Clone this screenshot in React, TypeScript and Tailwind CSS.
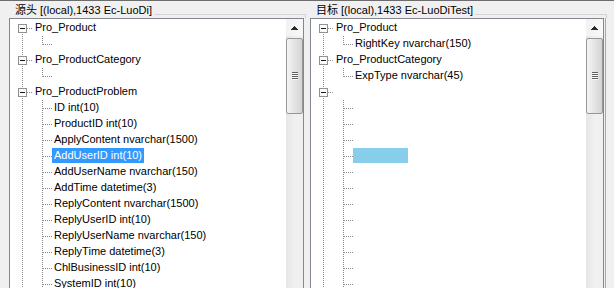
import React from "react";

type Row = {
  kind: "root" | "leaf";
  label: string;
  first?: boolean;
  last?: boolean;
  sel?: "active" | "inactive";
};

const leftRows: Row[] = [
  { kind: "root", label: "Pro_Product", first: true },
  { kind: "leaf", label: "", last: true },
  { kind: "root", label: "Pro_ProductCategory" },
  { kind: "leaf", label: "", last: true },
  { kind: "root", label: "Pro_ProductProblem" },
  { kind: "leaf", label: "ID int(10)" },
  { kind: "leaf", label: "ProductID int(10)" },
  { kind: "leaf", label: "ApplyContent nvarchar(1500)" },
  { kind: "leaf", label: "AddUserID int(10)", sel: "active" },
  { kind: "leaf", label: "AddUserName nvarchar(150)" },
  { kind: "leaf", label: "AddTime datetime(3)" },
  { kind: "leaf", label: "ReplyContent nvarchar(1500)" },
  { kind: "leaf", label: "ReplyUserID int(10)" },
  { kind: "leaf", label: "ReplyUserName nvarchar(150)" },
  { kind: "leaf", label: "ReplyTime datetime(3)" },
  { kind: "leaf", label: "ChlBusinessID int(10)" },
  { kind: "leaf", label: "SystemID int(10)" },
];

const rightRows: Row[] = [
  { kind: "root", label: "Pro_Product", first: true },
  { kind: "leaf", label: "RightKey nvarchar(150)", last: true },
  { kind: "root", label: "Pro_ProductCategory" },
  { kind: "leaf", label: "ExpType nvarchar(45)", last: true },
  { kind: "root", label: "" },
  { kind: "leaf", label: "" },
  { kind: "leaf", label: "" },
  { kind: "leaf", label: "" },
  { kind: "leaf", label: "", sel: "inactive" },
  { kind: "leaf", label: "" },
  { kind: "leaf", label: "" },
  { kind: "leaf", label: "" },
  { kind: "leaf", label: "" },
  { kind: "leaf", label: "" },
  { kind: "leaf", label: "" },
  { kind: "leaf", label: "" },
  { kind: "leaf", label: "" },
];

const DOT = "#8a8a8a";

// expander box + root connector
function RootCell({ first }: { first?: boolean }) {
  return (
    <svg width="23" height="16" className="shrink-0" shapeRendering="crispEdges">
      {!first && <line x1="12.5" y1="0" x2="12.5" y2="4" stroke={DOT} strokeDasharray="1 1" />}
      <line x1="12.5" y1="14" x2="12.5" y2="16" stroke={DOT} strokeDasharray="1 1" />
      <line x1="17" y1="8.5" x2="23" y2="8.5" stroke={DOT} strokeDasharray="1 1" />
      <rect x="8.5" y="4.5" width="8" height="8" fill="#fbfbfb" stroke="#919191" />
      <line x1="10" y1="8.5" x2="15" y2="8.5" stroke="#1a1a1a" />
    </svg>
  );
}

function PassCell() {
  return (
    <svg width="23" height="16" className="shrink-0" shapeRendering="crispEdges">
      <line x1="12.5" y1="0" x2="12.5" y2="16" stroke={DOT} strokeDasharray="1 1" />
    </svg>
  );
}

function LeafCell({ last }: { last?: boolean }) {
  return (
    <svg width="19" height="16" className="shrink-0" shapeRendering="crispEdges">
      <line x1="9.5" y1="0" x2="9.5" y2={last ? 9 : 16} stroke={DOT} strokeDasharray="1 1" />
      <line x1="10" y1="8.5" x2="19" y2="8.5" stroke={DOT} strokeDasharray="1 1" />
    </svg>
  );
}

function TreeRow({ row }: { row: Row }) {
  const selClass =
    row.sel === "active"
      ? "bg-[#3399ff] text-white"
      : row.sel === "inactive"
      ? "bg-[#87ceeb] w-[55px]"
      : "";
  return (
    <div className="flex h-[16px] items-start">
      {row.kind === "root" ? (
        <RootCell first={row.first} />
      ) : (
        <>
          <PassCell />
          <LeafCell last={row.last} />
        </>
      )}
      <span className={`h-[15px] whitespace-nowrap px-[2px] leading-[15px] ${selClass}`}>{row.label}</span>
    </div>
  );
}

function ScrollBar() {
  return (
    <div className="flex w-[17px] shrink-0 flex-col bg-gradient-to-r from-[#e6e6e6] via-[#f0f0f0] to-[#f0f0f0]">
      <div className="flex h-[17px] shrink-0 items-center justify-center bg-gradient-to-r from-[#f2f2f2] to-[#f8f8f8]">
        <svg width="7" height="4" shapeRendering="crispEdges">
          <path d="M3.5 0 L7 4 L0 4 Z" fill="#2a2a2a" />
        </svg>
      </div>
      <div className="mt-[2px] flex h-[76px] shrink-0 items-center justify-center rounded-[2px] border border-[#979797] bg-gradient-to-r from-[#f4f4f4] via-[#e4e4e4] to-[#d4d4d4]">
        <svg width="6" height="8" shapeRendering="crispEdges">
          {[0, 2, 4, 6].map((y) => (
            <g key={y}>
              <line x1="0" y1={y + 0.5} x2="6" y2={y + 0.5} stroke="#5e5e5e" />
              <line x1="0" y1={y + 1.5} x2="6" y2={y + 1.5} stroke="#fafafa" />
            </g>
          ))}
        </svg>
      </div>
      <div className="flex-1" />
    </div>
  );
}

function TreeBox({ rows, className }: { rows: Row[]; className: string }) {
  return (
    <div className={`flex h-[272px] shrink-0 border border-[#828790] bg-white ${className}`}>
      <div className="flex-1 overflow-hidden pt-[1px]">
        {rows.map((r, i) => (
          <TreeRow key={i} row={r} />
        ))}
      </div>
      <ScrollBar />
    </div>
  );
}

export default function App() {
  return (
    <div className="flex h-[288px] w-[614px] overflow-hidden border-t border-[#6d6d6d] bg-[#f0f0f0] font-['Liberation_Sans','Noto_Sans_CJK_SC',sans-serif] text-[11px] text-black">
      {/* source */}
      <div className="flex w-[306px] shrink-0 flex-col">
        <div className="flex h-[17px] shrink-0 pl-[15px]">
          <span className="whitespace-nowrap leading-[18px]">源头 [(local),1433 Ec-LuoDi]</span>
          <div className="ml-[2px] h-[4px] flex-1 self-end border-r border-t border-[#d4d4d4]" />
        </div>
        <TreeBox rows={leftRows} className="ml-[9px] w-[295px]" />
      </div>

      {/* target */}
      <div className="flex flex-1 flex-col">
        <div className="flex h-[17px] shrink-0 pl-[10px]">
          <span className="whitespace-nowrap leading-[18px]">目标 [(local),1433 Ec-LuoDiTest]</span>
          <div className="mr-[7px] ml-[2px] h-[4px] flex-1 self-end border-r border-t border-[#d4d4d4]" />
        </div>
        <div className="flex flex-1">
          <TreeBox rows={rightRows} className="ml-[4px] w-[294px]" />
          <div className="ml-[1px] w-px bg-[#a9a9a9]" />
        </div>
      </div>
    </div>
  );
}
